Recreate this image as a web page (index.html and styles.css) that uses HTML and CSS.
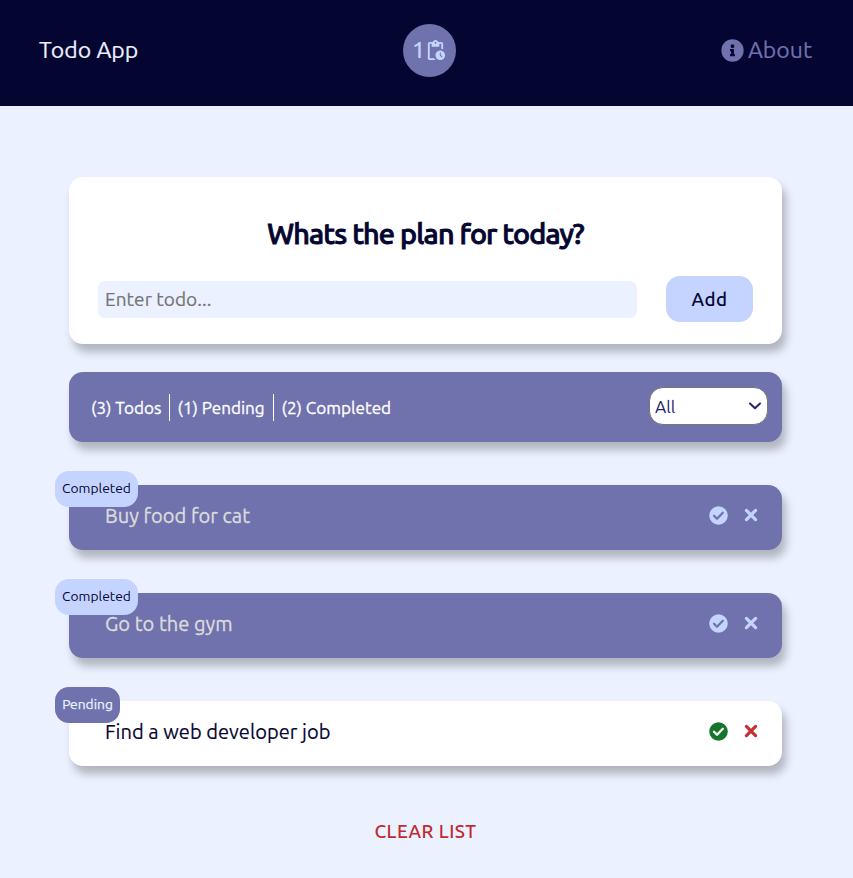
FILE: index.html
```html
<!DOCTYPE html>
<html lang="en">
<head>
<meta charset="utf-8">
<title>Todo App</title>
<link rel="stylesheet" href="styles.css">
</head>
<body>
<svg class="sprite" aria-hidden="true">
  <symbol id="check" viewBox="0 0 19 19"><circle cx="9.500" cy="9.500" r="9.300"/><path class="tick" d="M5 9.800l3 3 5.800-6"/></symbol>
  <symbol id="cross" viewBox="0 0 14 14"><path d="M2.400 2.400l9.200 9.200M11.600 2.400l-9.200 9.200"/></symbol>
</svg>
<header class="header">
  <h1 class="brand">Todo App</h1>
  <div class="counter">
    <span class="counter-number">1</span>
    <svg class="counter-icon" viewBox="0 0 24 24"><path d="M17 12c-2.760 0-5 2.240-5 5s2.240 5 5 5 5-2.240 5-5-2.240-5-5-5zm1.650 7.350L16.500 17.200V14h1v2.790l1.850 1.850-.7.710zM18 3h-3.180C14.400 1.840 13.300 1 12 1s-2.400.84-2.820 2H6c-1.100 0-2 .9-2 2v15c0 1.100.9 2 2 2h6.110a6.743 6.743 0 0 1-1.420-2H6V5h2v3h8V5h2v5.080c.71.100 1.380.310 2 .600V5c0-1.100-.9-2-2-2zm-6 2c-.55 0-1-.45-1-1s.45-1 1-1 1 .45 1 1-.45 1-1 1z"/></svg>
  </div>
  <a class="about">
    <svg class="about-icon" viewBox="0 0 512 512"><path fill-rule="evenodd" d="M256 8a248 248 0 1 0 0 496 248 248 0 1 0 0-496zm0 110a42 42 0 1 1 0 84 42 42 0 1 1 0-84zm56 254c0 7-5 12-12 12h-88c-7 0-12-5-12-12v-24c0-7 5-12 12-12h12v-64h-12c-7 0-12-5-12-12v-24c0-7 5-12 12-12h64c7 0 12 5 12 12v100h12c7 0 12 5 12 12v24z"/></svg>
    <span>About</span>
  </a>
</header>
<main class="main">
  <form class="card form">
    <h2 class="heading">Whats the plan for today?</h2>
    <div class="form-row">
      <input class="field" type="text" placeholder="Enter todo...">
      <button class="add" type="button">Add</button>
    </div>
  </form>
  <section class="card stats">
    <div class="counts">
      <span class="count c1">(3) Todos</span>
      <span class="count c2">(1) Pending</span>
      <span class="count c3">(2) Completed</span>
    </div>
    <div class="filter"><span>All</span>
      <svg class="chevron" viewBox="0 0 12 8"><path d="M1 1.500 6 6.200l5-4.700"/></svg>
    </div>
  </section>
  <ul class="list">
    <li class="card item done"><span class="badge">Completed</span><span class="title">Buy food for cat</span>
      <svg class="check"><use href="#check"/></svg><svg class="cross"><use href="#cross"/></svg></li>
    <li class="card item done"><span class="badge">Completed</span><span class="title">Go to the gym</span>
      <svg class="check"><use href="#check"/></svg><svg class="cross"><use href="#cross"/></svg></li>
    <li class="card item"><span class="badge pending">Pending</span><span class="title">Find a web developer job</span>
      <svg class="check"><use href="#check"/></svg><svg class="cross"><use href="#cross"/></svg></li>
  </ul>
  <button class="clear" type="button">CLEAR LIST</button>
</main>
</body>
</html>
```
FILE: styles.css
```css
* { box-sizing: border-box; margin: 0; padding: 0; }
body {
  font-family: Ubuntu, "Noto Sans", sans-serif;
  background: #ebf1ff;
  color: #040530;
  min-height: 878px;
  overflow: hidden;
}
.sprite { display: none; }
button, input { font-family: inherit; color: inherit; border: 0; outline: 0; }
span { white-space: nowrap; }

.header {
  display: flex;
  justify-content: space-between;
  align-items: center;
  height: 106px;
  padding: 0 41px 5px 39px;
  background: #040530;
}
.brand { font-size: 23.04px; font-weight: 400; color: #ebf1ff; line-height: 30px; margin-top: -2px; -webkit-text-stroke: .2px; }
.counter {
  display: flex;
  align-items: center;
  justify-content: center;
  width: 53px;
  height: 53px;
  border-radius: 50%;
  background: #6f72ac;
  color: #c4d4ff;
}
.counter-number { font-size: 23.04px; font-weight: 500; line-height: 30px; margin-top: -2px; }
.counter-icon { width: 23px; height: 23px; margin: -1px 0 0 -1px; fill: #c4d4ff; }
.about { display: flex; align-items: center; justify-content: flex-end; gap: 4px; color: #6f72ac; font-size: 23.04px; line-height: 30px; }
.about span { margin-top: -2px; -webkit-text-stroke: .2px; }
.about-icon { width: 23px; height: 23px; fill: #6f72ac; }

.main { display: flex; flex-direction: column; width: 713px; margin: 71px 0 0 69px; }
.card { border-radius: 14px; box-shadow: 4px 8px 8px rgba(0, 0, 0, .25); }
.form { height: 167px; padding: 37px 29px 0; background: #fff; }
.heading {
  font-size: 28.8px;
  line-height: 38px;
  font-weight: 500;
  letter-spacing: -.86px;
  text-align: center;
  -webkit-text-stroke: .9px #040530;
}
.form-row { display: flex; align-items: center; justify-content: space-between; margin-top: 24px; }
.field { width: 539px; height: 37px; padding: 0 7px; border-radius: 7px; background: #ebf1ff; font-size: 19px; }
.field::placeholder { color: #757575; opacity: 1; -webkit-text-stroke: .2px; letter-spacing: .05px; }
.add { width: 87px; height: 46px; border-radius: 14px; background: #c4d4ff; font-size: 18.72px; font-weight: 500; letter-spacing: .4px; }

.stats {
  display: flex;
  justify-content: space-between;
  align-items: center;
  height: 70px;
  margin-top: 28px;
  padding: 0 14px 0 22px;
  background: #6f72ac;
  color: #fff;
}
.counts { display: flex; height: 27px; line-height: 28px; font-size: 17.1px; -webkit-text-stroke: .3px; }
.count + .count { border-left: 1px solid #fff; padding-left: 7.500px; }
.c1 { width: 78px; }
.c2 { width: 104px; }
.filter {
  display: flex;
  align-items: center;
  justify-content: space-between;
  width: 119px;
  height: 38px;
  margin: -2px 0 0;
  padding: 0 6px 0 5px;
  border: 1px solid #767676;
  border-radius: 14px;
  background: #fff;
  color: #23246b;
  font-size: 17.28px;
}
.chevron { width: 12px; height: 8px; fill: none; stroke: #23246b; stroke-width: 2; stroke-linecap: round; stroke-linejoin: round; }

.list { display: flex; flex-direction: column; gap: 43px; margin-top: 43px; list-style: none; }
.item { position: relative; display: flex; align-items: center; height: 65px; padding: 0 24px 4px 36px; background: #fff; }
.title { flex: 1; font-size: 20.1px; line-height: 28px; -webkit-text-stroke: .15px; }
.badge {
  position: absolute;
  left: -14px;
  top: -14px;
  width: 83px;
  height: 36px;
  border-radius: 14px;
  background: #c4d4ff;
  color: #040530;
  font-size: 13.8px;
  line-height: 35px;
  text-align: center;
}
.badge.pending { width: 65px; background: #6f72ac; color: #ebf1ff; -webkit-text-stroke: .25px; }
.check { width: 19px; height: 19px; color: #15752b; fill: currentColor; --tick: #fff; }
.tick { fill: none; stroke: var(--tick); stroke-width: 2.3; stroke-linecap: round; stroke-linejoin: round; }
.cross { width: 14px; height: 14px; margin: -1px 0 0 16px; fill: none; stroke: #c62f33; stroke-width: 3.2; stroke-linecap: round; }
.done { background: #6f72ac; }
.done .title { color: #dcdcdc; -webkit-text-stroke: .3px; }
.done .check { color: #c4d4ff; --tick: #6f72ac; }
.done .cross { stroke: #c4d4ff; }
.clear { align-self: center; margin-top: 53px; background: none; color: #c12a30; font-size: 18.72px; font-weight: 500; line-height: 26px; letter-spacing: .5px; }
```
